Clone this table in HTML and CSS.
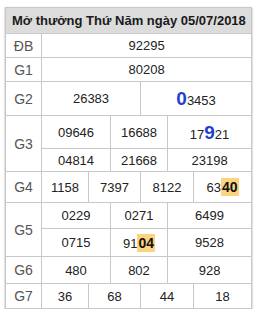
FILE: index.html
```html
<!DOCTYPE html>
<html lang="vi">
<head>
<meta charset="utf-8">
<link rel="stylesheet" href="styles.css">
</head>
<body>
<table class="kq">
  <colgroup>
    <col class="c-lbl"><col class="c1"><col class="c2"><col class="c3"><col class="c4"><col class="c5"><col class="c6">
  </colgroup>
  <thead>
    <tr class="r-head"><th colspan="7">Mở thưởng Thứ Năm ngày 05/07/2018</th></tr>
  </thead>
  <tbody>
    <tr class="r-24"><td class="lbl">ĐB</td><td colspan="6">92295</td></tr>
    <tr class="r-24"><td class="lbl">G1</td><td colspan="6">80208</td></tr>
    <tr class="r-34"><td class="lbl">G2</td><td colspan="3">26383</td><td colspan="3"><b class="big">0</b>3453</td></tr>
    <tr class="r-33"><td class="lbl" rowspan="2">G3</td><td colspan="2">09646</td><td colspan="2">16688</td><td colspan="2">17<b class="big">9</b>21</td></tr>
    <tr class="r-23"><td colspan="2">04814</td><td colspan="2">21668</td><td colspan="2">23198</td></tr>
    <tr class="r-31"><td class="lbl">G4</td><td>1158</td><td colspan="2">7397</td><td colspan="2">8122</td><td>63<b class="hl">40</b></td></tr>
    <tr class="r-26"><td class="lbl" rowspan="2">G5</td><td colspan="2">0229</td><td colspan="2">0271</td><td colspan="2">6499</td></tr>
    <tr class="r-28"><td colspan="2">0715</td><td colspan="2">91<b class="hl">04</b></td><td colspan="2">9528</td></tr>
    <tr class="r-27"><td class="lbl">G6</td><td colspan="2">480</td><td colspan="2">802</td><td colspan="2">928</td></tr>
    <tr class="r-25"><td class="lbl">G7</td><td>36</td><td colspan="2">68</td><td colspan="2">44</td><td>18</td></tr>
  </tbody>
</table>
</body>
</html>
```
FILE: styles.css
```css
html, body {
  margin: 0;
  padding: 0;
  background: #fff;
}
body {
  padding: 7px 5px 0 5px;
  font-family: "Liberation Sans", Arial, sans-serif;
}
.kq {
  border-collapse: collapse;
  table-layout: fixed;
  width: 246px;
  font-size: 13px;
  color: #222;
  box-shadow: 0 1px 2px rgba(0,0,0,0.35);
}
.c-lbl { width: 36px; }
.c1 { width: 47px; }
.c2 { width: 22px; }
.c3 { width: 30px; }
.c4 { width: 27px; }
.c5 { width: 26px; }
.c6 { width: 58px; }
.kq th, .kq td {
  border: 1px solid #c8c8c8;
  padding: 0;
  text-align: center;
  vertical-align: middle;
  white-space: nowrap;
  overflow: hidden;
}
.kq th {
  background: #dcdcdc;
  text-align: left;
  padding-left: 6px;
  font-weight: bold;
  font-size: 13px;
  color: #1a1a1a;
  height: 25px;
}
.kq td.lbl {
  color: #555;
  font-size: 14px;
}
.r-24 td { height: 23px; }
.r-34 td { height: 33px; }
.r-33 td { height: 32px; }
.r-23 td { height: 22px; }
.r-31 td { height: 30px; }
.r-26 td { height: 25px; }
.r-28 td { height: 27px; }
.r-27 td { height: 26px; }
.r-25 td { height: 24px; }
.big {
  color: #1f3fd6;
  font-size: 19px;
  font-weight: bold;
  line-height: 1;
}
.hl {
  background: #fcd37e;
  font-weight: bold;
  font-size: 14px;
  padding: 1px 1px;
  color: #111;
}
```
